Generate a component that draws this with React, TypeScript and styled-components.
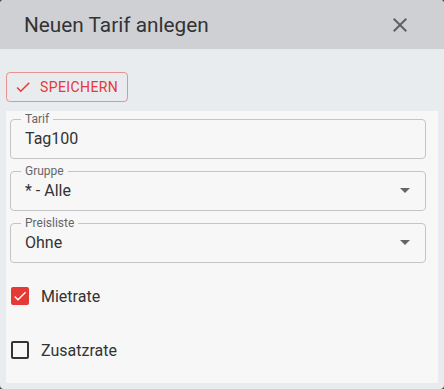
import styled, { createGlobalStyle } from "styled-components";

const GlobalStyle = createGlobalStyle`
  html, body {
    margin: 0;
    padding: 0;
    background: #4a4a4a;
  }
  body {
    font-family: Roboto, "Liberation Sans", Arial, sans-serif;
  }
  * {
    box-sizing: border-box;
  }
`;

type SelectField = { label: string; value: string; select?: boolean };

const fields: SelectField[] = [
  { label: "Tarif", value: "Tag100" },
  { label: "Gruppe", value: "* - Alle", select: true },
  { label: "Preisliste", value: "Ohne", select: true },
];

const options = [
  { label: "Mietrate", checked: true },
  { label: "Zusatzrate", checked: false },
];

function CloseIcon() {
  return (
    <svg width="24" height="24" viewBox="0 0 24 24" fill="currentColor">
      <path d="M19 6.41 17.59 5 12 10.59 6.41 5 5 6.41 10.59 12 5 17.59 6.41 19 12 13.41 17.59 19 19 17.59 13.41 12z" />
    </svg>
  );
}

function CheckIcon({ size }: { size: number }) {
  return (
    <svg width={size} height={size} viewBox="0 0 24 24" fill="currentColor">
      <path d="M9 16.17 4.83 12l-1.42 1.41L9 19 21 7l-1.41-1.41z" />
    </svg>
  );
}

function ArrowDropDown() {
  return (
    <svg width="24" height="24" viewBox="0 0 24 24" fill="currentColor">
      <path d="M7 10l5 5 5-5z" />
    </svg>
  );
}

function App() {
  return (
    <>
      <GlobalStyle />
      <Dialog>
        <Header>
          <Title>Neuen Tarif anlegen</Title>
          <CloseButton aria-label="close">
            <CloseIcon />
          </CloseButton>
        </Header>
        <Toolbar>
          <SaveButton>
            <CheckIcon size={18} />
            <span>Speichern</span>
          </SaveButton>
        </Toolbar>
        <Card>
          {fields.map((f) => (
            <Field key={f.label}>
              <Legend>{f.label}</Legend>
              <ValueRow>
                <span>{f.value}</span>
                {f.select && (
                  <ArrowBox>
                    <ArrowDropDown />
                  </ArrowBox>
                )}
              </ValueRow>
            </Field>
          ))}
          <CheckList>
            {options.map((o) => (
              <CheckRow key={o.label}>
                <Box $checked={o.checked}>
                  {o.checked && <CheckIcon size={16} />}
                </Box>
                <CheckLabel>{o.label}</CheckLabel>
              </CheckRow>
            ))}
          </CheckList>
        </Card>
      </Dialog>
    </>
  );
}

const Dialog = styled.div`
  width: 444px;
  height: 389px;
  border-radius: 4px;
  overflow: hidden;
  background: #e9ecef;
  display: flex;
  flex-direction: column;
`;

const Header = styled.div`
  height: 49px;
  flex: none;
  background: #cfd0d4;
  padding: 0 24px;
  display: flex;
  align-items: center;
  justify-content: space-between;
`;

const Title = styled.h2`
  margin: 0;
  font-size: 20.8px;
  font-weight: 400;
  color: #333;
`;

const CloseButton = styled.button`
  width: 40px;
  height: 40px;
  padding: 8px;
  border: none;
  background: transparent;
  color: #616161;
  display: flex;
  align-items: center;
  justify-content: center;
`;

const Toolbar = styled.div`
  padding: 23px 6px 9px;
  display: flex;
`;

const SaveButton = styled.button`
  height: 30px;
  display: flex;
  align-items: center;
  gap: 8px;
  padding: 0 9px 0 7px;
  border: 1px solid rgba(229, 57, 53, 0.5);
  border-radius: 4px;
  background: transparent;
  color: #e53935;
  font-family: Roboto, "Liberation Sans", Arial, sans-serif;
  font-size: 14px;
  font-weight: 400;
  letter-spacing: 0.4px;
  text-transform: uppercase;
`;

const Card = styled.div`
  margin: 0 6px 6px;
  padding: 1px 12px 6px 4px;
  background: #f7f7f7;
  display: flex;
  flex-direction: column;
  gap: 5px;
  flex: 1;
`;

const Field = styled.fieldset`
  margin: 0;
  min-width: 0;
  padding: 0 14px 8px;
  border: 1px solid #c4c4c4;
  border-radius: 4px;
`;

const Legend = styled.legend`
  font-size: 12px;
  line-height: 14px;
  padding: 0 4px;
  margin-left: -4px;
  color: #666;
`;

const ValueRow = styled.div`
  height: 24px;
  display: flex;
  align-items: center;
  justify-content: space-between;
  font-size: 16px;
  color: #333;
`;

const ArrowBox = styled.span`
  display: flex;
  color: #666;
  margin-right: -6px;
`;

const CheckList = styled.div`
  margin-top: 1px;
  display: flex;
  flex-direction: column;
`;

const CheckRow = styled.label`
  height: 54px;
  display: flex;
  align-items: center;
  gap: 12px;
  padding-left: 1px;
`;

const Box = styled.span<{ $checked: boolean }>`
  width: 18px;
  height: 18px;
  border-radius: 2px;
  display: flex;
  align-items: center;
  justify-content: center;
  color: #fff;
  background: ${(p) => (p.$checked ? "#e53935" : "transparent")};
  border: ${(p) => (p.$checked ? "none" : "2px solid #333")};
`;

const CheckLabel = styled.span`
  font-size: 16px;
  color: #333;
`;

export default App;
